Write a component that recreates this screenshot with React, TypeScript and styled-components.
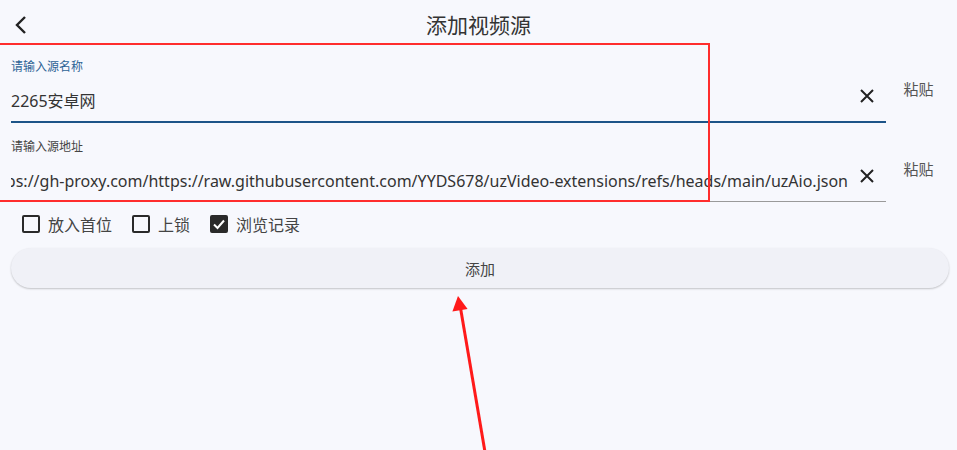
import React from "react";
import styled, { createGlobalStyle } from "styled-components";

const GlobalStyle = createGlobalStyle`
  html, body {
    margin: 0;
    padding: 0;
    background: #f7f8fd;
  }
  body {
    font-family: "Noto Sans", "Noto Sans CJK SC", sans-serif;
    color: #333;
  }
`;

const Page = styled.div`
  position: relative;
  width: 957px;
  height: 450px;
  overflow: hidden;
  background: #f7f8fd;
`;

const Header = styled.div`
  display: grid;
  grid-template-columns: 60px 1fr 60px;
  align-items: center;
  height: 50px;
`;

const BackButton = styled.button`
  display: flex;
  align-items: center;
  justify-content: flex-start;
  padding: 0 0 0 13px;
  border: none;
  background: none;
  height: 50px;
  cursor: pointer;
`;

const Title = styled.h1`
  margin: 0;
  text-align: center;
  font-size: 21px;
  font-weight: 400;
  color: #333;
  line-height: 50px;
`;

const Form = styled.div`
  display: flex;
  flex-direction: column;
  padding: 0 6px 0 11px;
  margin-top: -7px;
`;

const FieldRow = styled.div`
  display: flex;
`;

const Field = styled.div<{ $active?: boolean }>`
  flex: 1;
  padding: 18px 0 8px 0;
  border-bottom: ${(p) => (p.$active ? "2px solid #1d5488" : "1px solid #9a9a9a")};
  min-width: 0;
`;

const Label = styled.div<{ $active?: boolean }>`
  font-size: 12px;
  line-height: 12px;
  height: 12px;
  color: ${(p) => (p.$active ? "#2e6496" : "#444")};
  margin-bottom: 16px;
`;

const ValueRow = styled.div`
  display: flex;
  align-items: center;
  height: 24px;
`;

// long values stay on one line and show their end, like a scrolled text field
const Value = styled.div`
  flex: 1;
  min-width: 0;
  display: flex;
  justify-content: flex-end;
  overflow: hidden;
  white-space: nowrap;
  font-size: 16px;
  line-height: 24px;
  color: #333;
`;

const ValueText = styled.span<{ $alignLeft?: boolean }>`
  flex-shrink: 0;
  ${(p) => (p.$alignLeft ? "margin-right: auto;" : "")}
`;

const ClearButton = styled.button`
  width: 38px;
  height: 24px;
  margin-bottom: 10px;
  display: flex;
  align-items: center;
  justify-content: center;
  border: none;
  background: none;
  padding: 0;
  flex-shrink: 0;
`;

const Paste = styled.div`
  width: 65px;
  padding-top: 37px;
  text-align: center;
  font-size: 15px;
  line-height: 18px;
  color: #555;
`;

const Options = styled.div`
  display: flex;
  align-items: center;
  gap: 20px;
  padding: 13px 0 0 11px;
  height: 18px;
`;

const Option = styled.label`
  display: flex;
  align-items: center;
  gap: 8px;
  font-size: 16px;
  color: #444;
`;

const Box = styled.span<{ $checked?: boolean }>`
  width: 18px;
  height: 18px;
  box-sizing: border-box;
  border: 2px solid #2a2a2a;
  border-radius: 2px;
  background: ${(p) => (p.$checked ? "#2a2a2a" : "transparent")};
  display: flex;
  align-items: center;
  justify-content: center;
`;

const AddButton = styled.button`
  margin-top: 15px;
  width: 938px;
  height: 40px;
  border: none;
  border-radius: 20px;
  background: #f0f1f7;
  box-shadow: 0 1px 2px rgba(0, 0, 0, 0.22);
  font-family: "Noto Sans", "Noto Sans CJK SC", sans-serif;
  font-size: 15px;
  color: #444;
  cursor: pointer;
`;

const Annotation = styled.svg`
  position: absolute;
  left: 0;
  top: 0;
  pointer-events: none;
`;

const XIcon = () => (
  <svg width="16" height="16" viewBox="0 0 16 16">
    <path d="M2 2 L14 14 M14 2 L2 14" stroke="#222" strokeWidth="2" fill="none" />
  </svg>
);

const Check = () => (
  <svg width="14" height="14" viewBox="0 0 14 14">
    <path d="M2 7.5 L5.5 11 L12 3.5" stroke="#fff" strokeWidth="2" fill="none" />
  </svg>
);

const options = [
  { label: "放入首位", checked: false },
  { label: "上锁", checked: false },
  { label: "浏览记录", checked: true },
];

export default function App() {
  return (
    <Page>
      <GlobalStyle />
      <Header>
        <BackButton>
          <svg width="16" height="20" viewBox="0 0 16 20">
            <path d="M12 2 L4 10 L12 18" stroke="#222" strokeWidth="2.4" fill="none" />
          </svg>
        </BackButton>
        <Title>添加视频源</Title>
        <div />
      </Header>
      <Form>
        <FieldRow>
          <Field $active>
            <Label $active>请输入源名称</Label>
            <ValueRow>
              <Value>
                <ValueText $alignLeft>2265安卓网</ValueText>
              </Value>
              <ClearButton>
                <XIcon />
              </ClearButton>
            </ValueRow>
          </Field>
          <Paste>粘贴</Paste>
        </FieldRow>
        <FieldRow>
          <Field>
            <Label>请输入源地址</Label>
            <ValueRow>
              <Value>
                <ValueText>
                  https://gh-proxy.com/https://raw.githubusercontent.com/YYDS678/uzVideo-extensions/refs/heads/main/uzAio.json
                </ValueText>
              </Value>
              <ClearButton>
                <XIcon />
              </ClearButton>
            </ValueRow>
          </Field>
          <Paste>粘贴</Paste>
        </FieldRow>
        <Options>
          {options.map((o) => (
            <Option key={o.label}>
              <Box $checked={o.checked}>{o.checked && <Check />}</Box>
              {o.label}
            </Option>
          ))}
        </Options>
        <AddButton>添加</AddButton>
      </Form>
      <Annotation width="957" height="450" viewBox="0 0 957 450">
        <rect x="-6" y="44" width="715" height="157" fill="none" stroke="#ff2d2d" strokeWidth="2" />
        <line x1="485" y1="452" x2="460" y2="305" stroke="#ff1a1a" strokeWidth="3" />
        <polygon points="458,296 467.6,309 452.4,311.4" fill="#ff1a1a" />
      </Annotation>
    </Page>
  );
}
